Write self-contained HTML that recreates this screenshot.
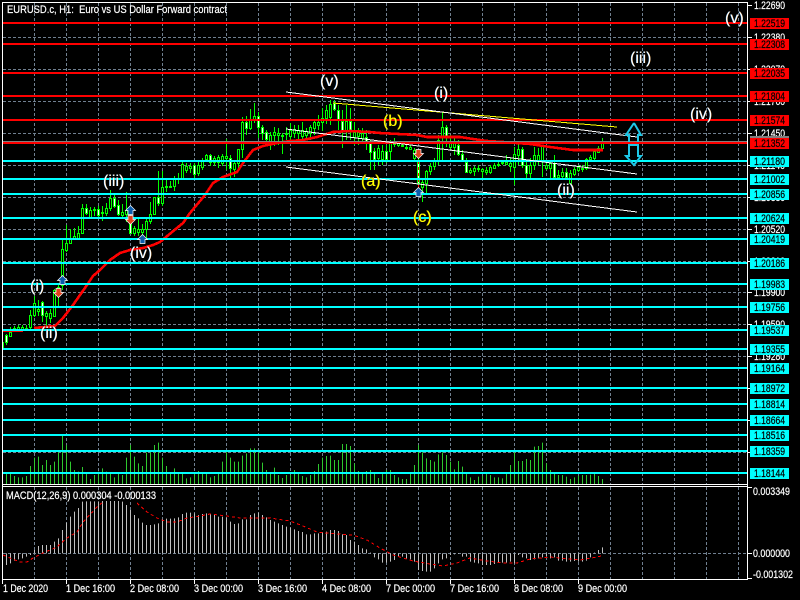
<!DOCTYPE html>
<html lang="en">
<head>
<meta charset="utf-8">
<title>EURUSD.c, H1</title>
<style>
html,body{margin:0;padding:0;background:#000;width:800px;height:600px;overflow:hidden}
#w{position:relative;width:800px;height:600px;overflow:hidden;background:#000}
svg{position:absolute;left:0;top:0;display:block}
svg text{font-family:"Liberation Sans",sans-serif;font-size:11px;stroke-width:.22px}
.l{position:absolute;font:16px/16px "Liberation Sans",sans-serif;color:#fff;white-space:nowrap;text-shadow:-.3px 0 #17c,.3px 0 #c71}
.y{color:#ff0;text-shadow:-.3px 0 #a71,.3px 0 #780}
</style>
</head>
<body>
<div id="w">
<svg width="800" height="600" viewBox="0 0 800 600" xmlns="http://www.w3.org/2000/svg">
<g shape-rendering="crispEdges" fill="none">
<!-- grid -->
<path stroke="#708090" stroke-dasharray="3 2" d="M34.5 3V484M66.5 3V484M98.5 3V484M130.5 3V484M162.5 3V484M194.5 3V484M226.5 3V484M258.5 3V484M290.5 3V484M322.5 3V484M354.5 3V484M386.5 3V484M418.5 3V484M450.5 3V484M482.5 3V484M514.5 3V484M546.5 3V484M578.5 3V484M610.5 3V484M642.5 3V484M674.5 3V484M706.5 3V484M738.5 3V484M34.5 487V579M66.5 487V579M98.5 487V579M130.5 487V579M162.5 487V579M194.5 487V579M226.5 487V579M258.5 487V579M290.5 487V579M322.5 487V579M354.5 487V579M386.5 487V579M418.5 487V579M450.5 487V579M482.5 487V579M514.5 487V579M546.5 487V579M578.5 487V579M610.5 487V579M642.5 487V579M674.5 487V579M706.5 487V579M738.5 487V579M3 37.5H747M3 69.5H747M3 101.5H747M3 133.5H747M3 165.5H747M3 197.5H747M3 229.5H747M3 261.5H747M3 292.5H747M3 324.5H747M3 356.5H747M3 388.5H747M3 420.5H747M3 452.5H747M3 553.5H747"/>
<!-- volume -->
<g transform="translate(0,420) scale(1,.33333)">
<path stroke="#2ec82e" d="M6.5 162V192M10.5 162V192M14.5 168V192M18.5 172V192M22.5 172V192M26.5 168V192M30.5 138V192M34.5 113V192M38.5 110V192M42.5 135V192M46.5 120V192M50.5 135V192M54.5 125V192M58.5 97V192M62.5 47V192M66.5 75V192M70.5 125V192M74.5 150V192M78.5 155V192M82.5 141V192M86.5 162V192M90.5 177V192M94.5 165V192M98.5 155V192M102.5 145V192M106.5 155V192M110.5 158V192M114.5 172V192M118.5 158V192M122.5 165V192M126.5 113V192M130.5 75V192M134.5 110V192M138.5 130V192M142.5 138V192M146.5 98V192M150.5 97V192M154.5 75V192M158.5 68V192M162.5 113V192M166.5 138V192M170.5 158V192M174.5 145V192M178.5 158V192M182.5 158V192M186.5 175V192M190.5 172V192M194.5 158V192M198.5 153V192M202.5 158V192M206.5 162V192M210.5 172V192M214.5 168V192M218.5 160V192M222.5 125V192M226.5 97V192M230.5 113V192M234.5 125V192M238.5 125V192M242.5 107V192M246.5 100V192M250.5 85V192M254.5 85V192M258.5 97V192M262.5 128V192M266.5 150V192M270.5 160V192M274.5 143V192M278.5 165V192M282.5 174V192M286.5 165V192M290.5 165V192M294.5 150V192M298.5 162V192M302.5 168V192M306.5 172V192M310.5 165V192M314.5 153V192M318.5 132V192M322.5 113V192M326.5 108V192M330.5 107V192M334.5 120V192M338.5 120V192M342.5 72V192M346.5 72V192M350.5 78V192M354.5 130V192M358.5 153V192M362.5 160V192M366.5 153V192M370.5 150V192M374.5 160V192M378.5 174V192M382.5 162V192M386.5 150V192M390.5 150V192M394.5 165V192M398.5 172V192M402.5 177V192M406.5 177V192M410.5 160V192M414.5 135V192M418.5 75V192M422.5 97V192M426.5 115V192M430.5 120V192M434.5 125V192M438.5 103V192M442.5 97V192M446.5 105V192M450.5 125V192M454.5 148V192M458.5 123V192M462.5 140V192M466.5 162V192M470.5 172V192M474.5 180V192M478.5 170V192M482.5 168V192M486.5 162V192M490.5 165V192M494.5 172V192M498.5 172V192M502.5 175V192M506.5 162V192M510.5 135V192M514.5 97V192M518.5 123V192M522.5 123V192M526.5 117V192M530.5 120V192M534.5 80V192M538.5 78V192M542.5 68V192M546.5 130V192M550.5 150V192M554.5 160V192M558.5 165V192M562.5 165V192M566.5 170V192M570.5 177V192M574.5 172V192M578.5 168V192M582.5 165V192M586.5 165V192M590.5 164V192M594.5 162V192M598.5 168V192M602.5 177V192"/>
<!-- macd histogram -->
<path stroke="#c0c0c0" d="M6.5 435V400M10.5 430V400M14.5 422V400M18.5 418V400M22.5 415V400M26.5 410V400M30.5 405V400M34.5 390V400M38.5 378V400M42.5 375V400M46.5 375V400M50.5 375V400M54.5 365V400M58.5 355V400M62.5 330V400M66.5 308V400M70.5 290V400M74.5 275V400M78.5 264V400M82.5 245V400M86.5 244V400M90.5 244V400M94.5 244V400M98.5 244V400M102.5 243V400M106.5 243V400M110.5 243V400M114.5 243V400M118.5 243V400M122.5 245V400M126.5 255V400M130.5 270V400M134.5 285V400M138.5 295V400M142.5 308V400M146.5 315V400M150.5 315V400M154.5 313V400M158.5 310V400M162.5 298V400M166.5 296V400M170.5 296V400M174.5 295V400M178.5 292V400M182.5 282V400M186.5 278V400M190.5 278V400M194.5 280V400M198.5 285V400M202.5 282V400M206.5 280V400M210.5 282V400M214.5 285V400M218.5 290V400M222.5 290V400M226.5 293V400M230.5 305V400M234.5 312V400M238.5 310V400M242.5 298V400M246.5 298V400M250.5 285V400M254.5 280V400M258.5 278V400M262.5 285V400M266.5 292V400M270.5 300V400M274.5 305V400M278.5 310V400M282.5 315V400M286.5 320V400M290.5 323V400M294.5 328V400M298.5 333V400M302.5 336V400M306.5 343V400M310.5 343V400M314.5 340V400M318.5 340V400M322.5 338V400M326.5 335V400M330.5 330V400M334.5 330V400M338.5 333V400M342.5 343V400M346.5 345V400M350.5 360V400M354.5 365V400M358.5 375V400M362.5 385V400M366.5 388V400M370.5 398V400M374.5 412V400M378.5 418V400M382.5 428V400M386.5 428V400M390.5 425V400M394.5 420V400M398.5 408V400M402.5 410V400M406.5 415V400M410.5 418V400M414.5 425V400M418.5 450V400M422.5 453V400M426.5 455V400M430.5 455V400M434.5 445V400M438.5 430V400M442.5 418V400M446.5 415V400M450.5 405V400M454.5 403V400M458.5 402V400M462.5 410V400M466.5 410V400M470.5 425V400M474.5 428V400M478.5 430V400M482.5 435V400M486.5 435V400M490.5 435V400M494.5 432V400M498.5 428V400M502.5 428V400M506.5 428V400M510.5 425V400M514.5 430V400M518.5 405V400M522.5 412V400M526.5 415V400M530.5 420V400M534.5 418V400M538.5 415V400M542.5 412V400M546.5 410V400M550.5 415V400M554.5 412V400M558.5 422V400M562.5 422V400M566.5 425V400M570.5 425V400M574.5 423V400M578.5 425V400M582.5 425V400M586.5 422V400M590.5 412V400M594.5 398V400M598.5 390V400M602.5 382V400"/>
</g>
<!-- macd signal -->
<path stroke="#f00" stroke-dasharray="3 3" d="M3 555L10 558L20 562L27 562L33 558L43 553L57 547L67 538L77 532L83 522L97 507L103 502M137 503L147 512L157 518L167 522L177 522L187 518L200 516L210 514L227 516L240 518L257 518L270 518L290 521L303 526L317 532L337 534L353 535L367 540L380 548L393 555L413 561L430 564L443 566L457 563L470 558L487 561L503 563L517 563L530 559L550 557L580 560L597 557L601 556"/>
<!-- candles -->
<path stroke="#0f0" d="M3.5 342V348M6.5 334V345M10.5 327V337M14.5 326V332M18.5 325V331M22.5 325V330M26.5 325V331M30.5 310V329M34.5 296V317M38.5 300V316M42.5 301V322M46.5 311V326M50.5 309V323M54.5 289V317M58.5 285V308M62.5 240V290M66.5 225V252M70.5 229V244M74.5 228V238M78.5 226V238M82.5 204V233M86.5 204V215M90.5 207V218M94.5 207V216M98.5 206V218M102.5 206V221M106.5 203V216M110.5 190V211M114.5 195V208M118.5 200V216M122.5 204V218M126.5 192V222M130.5 217V234M134.5 226V236M138.5 218V236M142.5 224V238M146.5 219V240M150.5 202V224M154.5 197V215M158.5 171V206M162.5 171V206M166.5 179V192M170.5 181V188M174.5 176V191M178.5 173V184M182.5 162V180M186.5 163V173M190.5 163V173M194.5 163V178M198.5 161V176M202.5 158V170M206.5 154V161M210.5 154V166M214.5 156V166M218.5 155V168M222.5 154V166M226.5 139V170M230.5 155V178M234.5 160V177M238.5 149V170M242.5 117V158M246.5 116V135M250.5 109V130M254.5 103V123M258.5 112V138M262.5 125V140M266.5 130V146M270.5 132V150M274.5 127V146M278.5 128V145M282.5 133V154M286.5 127V140M290.5 123V141M294.5 125V138M298.5 125V140M302.5 122V141M306.5 128V140M310.5 125V140M314.5 120V135M318.5 115V130M322.5 108V131M326.5 105V124M330.5 100V125M334.5 100V111M338.5 105V130M342.5 110V148M346.5 105V140M350.5 108V140M354.5 122V145M358.5 128V145M362.5 128V143M366.5 130V150M370.5 140V170M374.5 148V170M378.5 145V165M382.5 145V165M386.5 145V163M390.5 140V160M394.5 138V147M398.5 141V147M402.5 143V147M406.5 145V150M410.5 145V150M414.5 148V160M418.5 155V185M422.5 180V202M426.5 170V195M430.5 163V175M434.5 158V170M438.5 135V165M442.5 112V160M446.5 125V147M450.5 135V150M454.5 138V155M458.5 140V156M462.5 150V162M466.5 158V173M470.5 168V174M474.5 166V176M478.5 165V172M482.5 168V178M486.5 167V175M490.5 165V174M494.5 163V168M498.5 162V167M502.5 160V165M506.5 155V165M510.5 158V172M514.5 147V185M518.5 143V165M522.5 147V168M526.5 160V178M530.5 158V178M534.5 147V170M538.5 148V165M542.5 145V177M546.5 160V170M550.5 160V178M554.5 155V178M558.5 170V180M562.5 168V178M566.5 168V178M570.5 170V183M574.5 167V176M578.5 165V172M582.5 165V172M586.5 158V170M590.5 155V160M594.5 149V160M598.5 146V153M602.5 138V148"/>
<path stroke="#0f0" fill="#000" d="M9.5 332.5h2V336.5h-2zM13.5 328.5h2V331.5h-2zM17.5 327.5h2V329.5h-2zM21.5 327.5h2V329.5h-2zM25.5 328.5h2V329.5h-2zM29.5 315.5h2V327.5h-2zM33.5 303.5h2V315.5h-2zM37.5 309.5h2V311.5h-2zM45.5 313.5h2V316.5h-2zM49.5 313.5h2V318.5h-2zM53.5 290.5h2V316.5h-2zM57.5 287.5h2V290.5h-2zM61.5 249.5h2V285.5h-2zM65.5 243.5h2V250.5h-2zM69.5 238.5h2V243.5h-2zM73.5 236.5h2V238.5h-2zM77.5 233.5h2V238.5h-2zM81.5 208.5h2V233.5h-2zM89.5 210.5h2V217.5h-2zM93.5 209.5h2V210.5h-2zM101.5 212.5h2V213.5h-2zM105.5 208.5h2V213.5h-2zM109.5 198.5h2V208.5h-2zM121.5 212.5h2V215.5h-2zM125.5 210.5h2V214.5h-2zM133.5 228.5h2V233.5h-2zM137.5 229.5h2V232.5h-2zM141.5 229.5h2V232.5h-2zM145.5 221.5h2V229.5h-2zM149.5 214.5h2V221.5h-2zM153.5 197.5h2V214.5h-2zM161.5 187.5h2V203.5h-2zM165.5 186.5h2V187.5h-2zM169.5 186.5h2V187.5h-2zM173.5 178.5h2V186.5h-2zM177.5 178.5h2V179.5h-2zM181.5 164.5h2V178.5h-2zM185.5 166.5h2V170.5h-2zM189.5 166.5h2V168.5h-2zM197.5 165.5h2V173.5h-2zM201.5 160.5h2V167.5h-2zM205.5 155.5h2V159.5h-2zM213.5 158.5h2V162.5h-2zM217.5 157.5h2V162.5h-2zM221.5 156.5h2V163.5h-2zM225.5 156.5h2V158.5h-2zM233.5 163.5h2V169.5h-2zM237.5 149.5h2V163.5h-2zM241.5 122.5h2V149.5h-2zM249.5 120.5h2V128.5h-2zM253.5 116.5h2V120.5h-2zM269.5 135.5h2V141.5h-2zM273.5 132.5h2V135.5h-2zM277.5 133.5h2V135.5h-2zM281.5 135.5h2V136.5h-2zM285.5 133.5h2V134.5h-2zM289.5 130.5h2V136.5h-2zM293.5 129.5h2V133.5h-2zM297.5 130.5h2V133.5h-2zM301.5 130.5h2V136.5h-2zM305.5 131.5h2V135.5h-2zM309.5 127.5h2V133.5h-2zM313.5 122.5h2V128.5h-2zM317.5 122.5h2V125.5h-2zM321.5 118.5h2V122.5h-2zM325.5 110.5h2V118.5h-2zM329.5 104.5h2V117.5h-2zM345.5 121.5h2V130.5h-2zM353.5 132.5h2V137.5h-2zM357.5 132.5h2V136.5h-2zM361.5 133.5h2V138.5h-2zM377.5 148.5h2V158.5h-2zM381.5 151.5h2V159.5h-2zM389.5 143.5h2V151.5h-2zM393.5 143.5h2V144.5h-2zM397.5 143.5h2V145.5h-2zM401.5 145.5h2V146.5h-2zM405.5 147.5h2V148.5h-2zM409.5 147.5h2V149.5h-2zM413.5 150.5h2V158.5h-2zM421.5 182.5h2V187.5h-2zM425.5 171.5h2V183.5h-2zM429.5 166.5h2V171.5h-2zM433.5 160.5h2V166.5h-2zM437.5 140.5h2V160.5h-2zM441.5 127.5h2V137.5h-2zM449.5 143.5h2V147.5h-2zM453.5 143.5h2V147.5h-2zM469.5 170.5h2V172.5h-2zM473.5 168.5h2V171.5h-2zM477.5 168.5h2V169.5h-2zM481.5 169.5h2V171.5h-2zM485.5 170.5h2V172.5h-2zM489.5 167.5h2V172.5h-2zM493.5 165.5h2V168.5h-2zM497.5 164.5h2V165.5h-2zM501.5 162.5h2V163.5h-2zM505.5 162.5h2V164.5h-2zM509.5 163.5h2V166.5h-2zM513.5 154.5h2V167.5h-2zM517.5 149.5h2V155.5h-2zM529.5 165.5h2V173.5h-2zM533.5 155.5h2V165.5h-2zM537.5 155.5h2V160.5h-2zM541.5 145.5h2V160.5h-2zM545.5 165.5h2V168.5h-2zM549.5 163.5h2V168.5h-2zM557.5 175.5h2V177.5h-2zM561.5 172.5h2V176.5h-2zM569.5 173.5h2V183.5h-2zM573.5 169.5h2V174.5h-2zM577.5 167.5h2V170.5h-2zM581.5 168.5h2V169.5h-2zM585.5 159.5h2V168.5h-2zM589.5 157.5h2V159.5h-2zM593.5 151.5h2V158.5h-2zM597.5 148.5h2V152.5h-2zM601.5 143.5h2V148.5h-2z"/>
<path stroke="#0f0" fill="#fff" d="M5.5 335.5h2V342.5h-2zM41.5 302.5h2V315.5h-2zM85.5 208.5h2V213.5h-2zM97.5 209.5h2V215.5h-2zM113.5 198.5h2V206.5h-2zM117.5 205.5h2V214.5h-2zM129.5 222.5h2V233.5h-2zM157.5 197.5h2V203.5h-2zM193.5 165.5h2V174.5h-2zM209.5 155.5h2V162.5h-2zM229.5 158.5h2V168.5h-2zM245.5 122.5h2V128.5h-2zM257.5 116.5h2V127.5h-2zM261.5 127.5h2V133.5h-2zM265.5 132.5h2V139.5h-2zM333.5 103.5h2V109.5h-2zM337.5 110.5h2V119.5h-2zM341.5 121.5h2V130.5h-2zM349.5 121.5h2V130.5h-2zM365.5 137.5h2V142.5h-2zM369.5 143.5h2V152.5h-2zM373.5 151.5h2V159.5h-2zM385.5 151.5h2V159.5h-2zM417.5 160.5h2V183.5h-2zM445.5 127.5h2V137.5h-2zM457.5 145.5h2V154.5h-2zM461.5 154.5h2V160.5h-2zM465.5 162.5h2V172.5h-2zM521.5 149.5h2V165.5h-2zM525.5 165.5h2V173.5h-2zM553.5 163.5h2V177.5h-2zM565.5 172.5h2V177.5h-2z"/>
<path stroke="#f00" stroke-dasharray="3 3" d="M418.5 155V190"/>
<!-- MA -->
<path stroke="#f00" d="M3 331.5H23"/>
<path stroke="#f00" stroke-width="2.6" stroke-linejoin="round" d="M34 328L55 326L63 318L73 305L80 295L87 285L93 276L100 270L110 260L120 253L130 250L143 248L153 245L160 242L183 223L190 213L205 195L213 183L223 177L237 172L243 163L253 150L263 146L277 143L290 141L303 140L317 137L333 132L350 131L370 132L380 133L417 135L427 137L460 137L473 139L487 141L503 142L530 144L550 147L573 150L603 150"/>
<!-- horizontal lines -->
<path fill="#808080" d="M3 141h744v1H3z"/>
<path fill="#f00" d="M3 22h744v2H3zM3 43h744v2H3zM3 72h744v2H3zM3 95h744v2H3zM3 119h744v2H3zM3 142h744v2H3z"/>
<path fill="#0ff" d="M3 160h744v2H3zM3 178h744v2H3zM3 193h744v2H3zM3 217h744v2H3zM3 238h744v2H3zM3 262h744v2H3zM3 283h744v2H3zM3 306h744v2H3zM3 329h744v2H3zM3 348h744v2H3zM3 367h744v2H3zM3 387h744v2H3zM3 403h744v2H3zM3 419h744v2H3zM3 434h744v2H3zM3 450h744v2H3zM3 472h744v2H3z"/>
<!-- trend lines -->
<path stroke="#ff0" d="M333 103L617 127"/>
<path stroke="#fff" d="M286 92L637 137M286 129L637 174M286 167L637 212"/>
</g>
<!-- double arrow -->
<g fill="none" stroke="#1cc8e8" stroke-width="2" stroke-linejoin="miter">
<path d="M634 123L641 135H638V142M634 123L626 135H629V142"/>
<path d="M629 145V156H626L634 165L641 156H638V145H629Z"/>
</g>
<!-- markers -->
<g stroke="#fff" stroke-width=".7">
<path fill="#0a5cac" d="M62.5 275.5l5 5h-2.5v4h-5v-4h-2.500zM130.500 205.500l5 5h-2.500v4h-5v-4h-2.500zM142.500 234.500l5 5h-2.500v4h-5v-4h-2.500zM418.500 187.500l5 5h-2.500v4h-5v-4h-2.500z"/>
<path fill="#e0401c" d="M58.500 297.500l5 -5h-2.500v-4h-5v4h-2.500zM130.500 224.500l5 -5h-2.500v-4h-5v4h-2.500zM418.500 158.500l5 -5h-2.500v-4h-5v4h-2.500z"/>
</g>
<!-- frame -->
<path shape-rendering="crispEdges" fill="none" stroke="#fff" d="M2.5 2.5H747.5V579.5H2.5ZM2.5 484.5H747.5M2.5 486.5H747.5M748 5.5h4M748 37.5h4M748 69.5h4M748 101.5h4M748 133.5h4M748 165.5h4M748 197.5h4M748 229.5h4M748 261.5h4M748 292.5h4M748 324.5h4M748 356.5h4M748 388.5h4M748 420.5h4M748 452.5h4M748 487.5h4M748 553.5h4M748 578.5h4M2.5 580V584M66.5 580V584M130.5 580V584M194.5 580V584M258.5 580V584M322.5 580V584M386.5 580V584M450.5 580V584M514.5 580V584M578.5 580V584"/>
<!-- axis text -->
<g fill="#fff" stroke="#fff">
<text x="7" y="13" textLength="220" lengthAdjust="spacingAndGlyphs">EURUSD.c, H1:&#160; Euro vs US Dollar Forward contract</text>
<text x="6" y="499" textLength="150" lengthAdjust="spacingAndGlyphs">MACD(12,26,9) 0.000304 -0.000133</text>
<text x="754" y="9" textLength="31" lengthAdjust="spacingAndGlyphs">1.22690</text>
<text x="754" y="41" textLength="31" lengthAdjust="spacingAndGlyphs">1.22380</text>
<text x="754" y="73" textLength="31" lengthAdjust="spacingAndGlyphs">1.22070</text>
<text x="754" y="105" textLength="31" lengthAdjust="spacingAndGlyphs">1.21760</text>
<text x="754" y="137" textLength="31" lengthAdjust="spacingAndGlyphs">1.21450</text>
<text x="754" y="169" textLength="31" lengthAdjust="spacingAndGlyphs">1.21140</text>
<text x="754" y="201" textLength="31" lengthAdjust="spacingAndGlyphs">1.20830</text>
<text x="754" y="233" textLength="31" lengthAdjust="spacingAndGlyphs">1.20520</text>
<text x="754" y="265" textLength="31" lengthAdjust="spacingAndGlyphs">1.20210</text>
<text x="754" y="296" textLength="31" lengthAdjust="spacingAndGlyphs">1.19900</text>
<text x="754" y="328" textLength="31" lengthAdjust="spacingAndGlyphs">1.19590</text>
<text x="754" y="360" textLength="31" lengthAdjust="spacingAndGlyphs">1.19280</text>
<text x="754" y="392" textLength="31" lengthAdjust="spacingAndGlyphs">1.18970</text>
<text x="754" y="424" textLength="31" lengthAdjust="spacingAndGlyphs">1.18660</text>
<text x="754" y="456" textLength="31" lengthAdjust="spacingAndGlyphs">1.18350</text>
<text x="753" y="495" textLength="37" lengthAdjust="spacingAndGlyphs">0.003349</text>
<text x="753" y="557" textLength="37" lengthAdjust="spacingAndGlyphs">0.000000</text>
<text x="753" y="578" textLength="40" lengthAdjust="spacingAndGlyphs">-0.001302</text>
<text x="3" y="592" textLength="45" lengthAdjust="spacingAndGlyphs">1 Dec 2020</text>
<text x="66" y="592" textLength="49" lengthAdjust="spacingAndGlyphs">1 Dec 16:00</text>
<text x="130" y="592" textLength="49" lengthAdjust="spacingAndGlyphs">2 Dec 08:00</text>
<text x="194" y="592" textLength="49" lengthAdjust="spacingAndGlyphs">3 Dec 00:00</text>
<text x="258" y="592" textLength="49" lengthAdjust="spacingAndGlyphs">3 Dec 16:00</text>
<text x="322" y="592" textLength="49" lengthAdjust="spacingAndGlyphs">4 Dec 08:00</text>
<text x="386" y="592" textLength="49" lengthAdjust="spacingAndGlyphs">7 Dec 00:00</text>
<text x="450" y="592" textLength="49" lengthAdjust="spacingAndGlyphs">7 Dec 16:00</text>
<text x="514" y="592" textLength="49" lengthAdjust="spacingAndGlyphs">8 Dec 08:00</text>
<text x="578" y="592" textLength="49" lengthAdjust="spacingAndGlyphs">9 Dec 00:00</text>
</g>
<!-- price boxes -->
<g shape-rendering="crispEdges">
<path fill="#808080" d="M750 136h39v4h-39z"/>
<path fill="#f00" d="M750 18h39v11h-39zM750 39h39v11h-39zM750 68h39v11h-39zM750 91h39v11h-39zM750 115h39v11h-39zM750 138h39v11h-39z"/>
<path fill="#0ff" d="M750 156h39v11h-39zM750 174h39v11h-39zM750 189h39v11h-39zM750 213h39v11h-39zM750 234h39v11h-39zM750 258h39v11h-39zM750 279h39v11h-39zM750 302h39v11h-39zM750 325h39v11h-39zM750 344h39v11h-39zM750 363h39v11h-39zM750 383h39v11h-39zM750 399h39v11h-39zM750 415h39v11h-39zM750 430h39v11h-39zM750 446h39v11h-39zM750 468h39v11h-39z"/>
</g>
<g fill="#000" stroke="#000">
<text x="754" y="27" textLength="31" lengthAdjust="spacingAndGlyphs">1.22519</text>
<text x="754" y="48" textLength="31" lengthAdjust="spacingAndGlyphs">1.22308</text>
<text x="754" y="77" textLength="31" lengthAdjust="spacingAndGlyphs">1.22035</text>
<text x="754" y="100" textLength="31" lengthAdjust="spacingAndGlyphs">1.21804</text>
<text x="754" y="124" textLength="31" lengthAdjust="spacingAndGlyphs">1.21574</text>
<text x="754" y="147" textLength="31" lengthAdjust="spacingAndGlyphs">1.21352</text>
<text x="754" y="165" textLength="31" lengthAdjust="spacingAndGlyphs">1.21180</text>
<text x="754" y="183" textLength="31" lengthAdjust="spacingAndGlyphs">1.21002</text>
<text x="754" y="198" textLength="31" lengthAdjust="spacingAndGlyphs">1.20856</text>
<text x="754" y="222" textLength="31" lengthAdjust="spacingAndGlyphs">1.20624</text>
<text x="754" y="243" textLength="31" lengthAdjust="spacingAndGlyphs">1.20419</text>
<text x="754" y="267" textLength="31" lengthAdjust="spacingAndGlyphs">1.20186</text>
<text x="754" y="288" textLength="31" lengthAdjust="spacingAndGlyphs">1.19983</text>
<text x="754" y="311" textLength="31" lengthAdjust="spacingAndGlyphs">1.19756</text>
<text x="754" y="334" textLength="31" lengthAdjust="spacingAndGlyphs">1.19537</text>
<text x="754" y="353" textLength="31" lengthAdjust="spacingAndGlyphs">1.19355</text>
<text x="754" y="372" textLength="31" lengthAdjust="spacingAndGlyphs">1.19164</text>
<text x="754" y="392" textLength="31" lengthAdjust="spacingAndGlyphs">1.18972</text>
<text x="754" y="408" textLength="31" lengthAdjust="spacingAndGlyphs">1.18814</text>
<text x="754" y="424" textLength="31" lengthAdjust="spacingAndGlyphs">1.18664</text>
<text x="754" y="439" textLength="31" lengthAdjust="spacingAndGlyphs">1.18516</text>
<text x="754" y="455" textLength="31" lengthAdjust="spacingAndGlyphs">1.18359</text>
<text x="754" y="477" textLength="31" lengthAdjust="spacingAndGlyphs">1.18144</text>
</g>
</svg>
<div class="l" style="left:725px;top:11px">(v)</div>
<div class="l" style="left:630px;top:51px">(iii)</div>
<div class="l" style="left:690px;top:107px">(iv)</div>
<div class="l" style="left:320px;top:74px">(v)</div>
<div class="l" style="left:434px;top:86px">(i)</div>
<div class="l y" style="left:383px;top:114px">(b)</div>
<div class="l y" style="left:361px;top:174px">(a)</div>
<div class="l y" style="left:413px;top:210px">(c)</div>
<div class="l" style="left:557px;top:183px">(ii)</div>
<div class="l" style="left:103px;top:174px">(iii)</div>
<div class="l" style="left:130px;top:246px">(iv)</div>
<div class="l" style="left:30px;top:279px">(i)</div>
<div class="l" style="left:40px;top:326px">(ii)</div>
</div>
</body>
</html>
